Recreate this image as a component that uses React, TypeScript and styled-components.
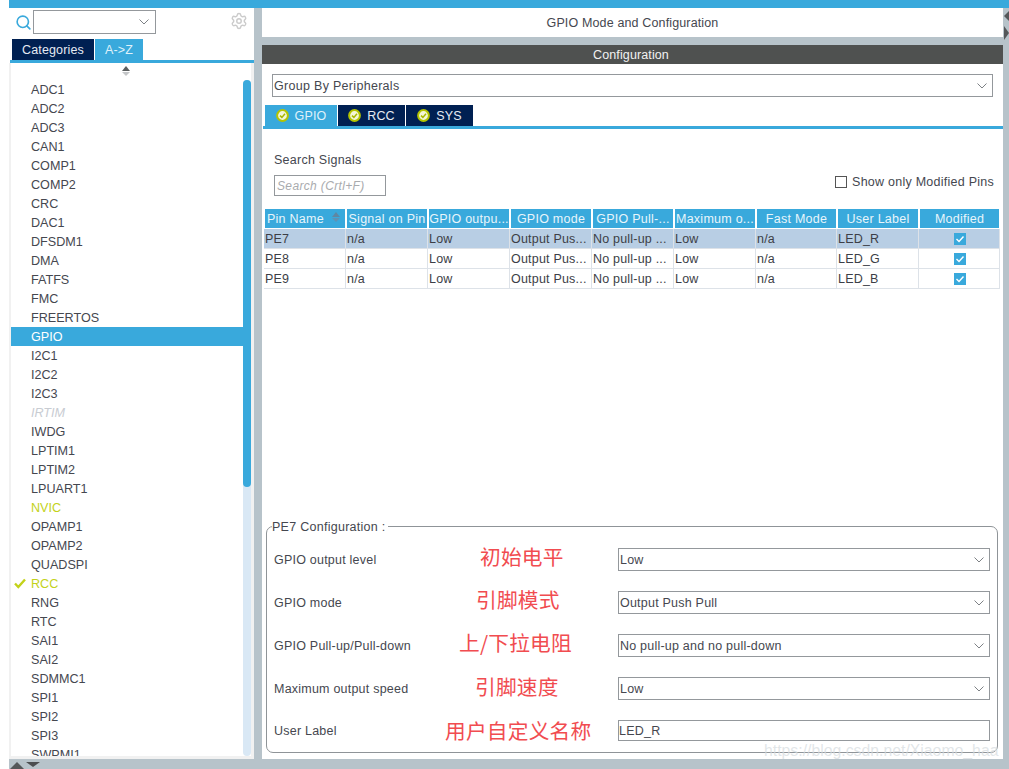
import React from "react";
import styled, { createGlobalStyle } from "styled-components";
import { Search, Settings } from "lucide-react";

const BLUE = "#39a9dc";
const NAVY = "#002052";
const GREY = "#b7c3ca";
const INK = "#45474f";
const LINE = "#94989c";
const LIME = "#c3d21a";
const FONT = `"Liberation Sans", Arial, sans-serif`;

const Global = createGlobalStyle`
  html, body { margin: 0; padding: 0; background: #fff; }
  * { box-sizing: border-box; }
  body { font-family: ${FONT}; color: ${INK}; overflow: hidden; }
`;

const Page = styled.div`
  width: 1009px;
  height: 769px;
  padding-left: 9px;
  display: flex;
  flex-direction: column;
  background: #fff;
  overflow: hidden;
  position: relative;
`;
const TopBar = styled.div`
  height: 8px;
  flex: none;
  background: ${BLUE};
`;
const Body = styled.div`
  flex: none;
  height: 751px;
  display: flex;
  background: ${GREY};
`;
const Footer = styled.div`
  flex: 1;
  background: ${GREY};
  display: flex;
  align-items: flex-end;
  gap: 2px;
  padding-left: 1px;
`;
const FooterDown = styled.span`
  align-self: flex-start;
  margin-top: 3px;
`;
const Sidebar = styled.aside`
  width: 245px;
  flex: none;
  background: #fff;
  display: flex;
  flex-direction: column;
`;
const SearchRow = styled.div`
  height: 31px;
  flex: none;
  display: flex;
  align-items: flex-start;
  padding: 2px 6px 0 6px;
  svg { flex: none; }
`;
const SearchIcon = styled.span`
  width: 18px;
  height: 24px;
  display: flex;
  align-items: center;
  color: ${BLUE};
`;
const Combo = styled.div`
  width: 123px;
  height: 24px;
  border: 1px solid ${LINE};
  display: flex;
  align-items: center;
  justify-content: flex-end;
  padding-right: 6px;
`;
const GearIcon = styled.span`
  margin-left: auto;
  margin-top: 2px;
  color: #cbcbcb;
  height: 18px;
`;
const TabRow = styled.div<{ $pad: number }>`
  height: 21px;
  flex: none;
  display: flex;
  gap: 1px;
  padding-left: ${(p) => p.$pad}px;
`;
const Tab = styled.div<{ $active?: boolean; $w: number }>`
  width: ${(p) => p.$w}px;
  height: 21px;
  background: ${(p) => (p.$active ? BLUE : NAVY)};
  color: ${(p) => (p.$active ? "#dff1fa" : "#e6ebf2")};
  font-size: 12.5px;
  letter-spacing: 0.15px;
  display: flex;
  align-items: center;
  justify-content: center;
  gap: 6px;
`;
const SideRule = styled.div`
  height: 3px;
  flex: none;
  margin-left: 1px;
  background: ${BLUE};
`;
const ListFrame = styled.div`
  flex: 1;
  min-height: 0;
  display: flex;
  flex-direction: column;
  background: #f1f1f1;
  padding: 0 3px 3px 2px;
`;
const ScrollCap = styled.div`
  height: 17px;
  flex: none;
  background: #fff;
  display: flex;
  flex-direction: column;
  align-items: center;
  padding-top: 3px;
  gap: 1px;
  padding-right: 10px;
`;
const TriUp = styled.i<{ $c: string; $w: number; $h: number }>`
  display: block;
  width: 0;
  height: 0;
  border-left: ${(p) => p.$w / 2}px solid transparent;
  border-right: ${(p) => p.$w / 2}px solid transparent;
  border-bottom: ${(p) => p.$h}px solid ${(p) => p.$c};
`;
const TriDown = styled.i<{ $c: string; $w: number; $h: number }>`
  display: block;
  width: 0;
  height: 0;
  border-left: ${(p) => p.$w / 2}px solid transparent;
  border-right: ${(p) => p.$w / 2}px solid transparent;
  border-top: ${(p) => p.$h}px solid ${(p) => p.$c};
`;
const ListArea = styled.div`
  flex: 1;
  min-height: 0;
  display: flex;
  background: #fff;
`;
const List = styled.div`
  flex: 1;
  overflow: hidden;
`;
const Item = styled.div<{ $selected?: boolean; $tone?: "ok" | "off" }>`
  height: 19px;
  line-height: 21px;
  padding-left: 20px;
  font-size: 12.6px;
  position: relative;
  white-space: nowrap;
  overflow: hidden;
  background: ${(p) => (p.$selected ? BLUE : "transparent")};
  color: ${(p) => (p.$selected ? "#fff" : p.$tone === "ok" ? LIME : p.$tone === "off" ? "#c8ccd2" : INK)};
  font-style: ${(p) => (p.$tone === "off" ? "italic" : "normal")};
`;
const ItemCheck = styled.svg`
  position: absolute;
  left: 3px;
  top: 4px;
`;
const Track = styled.div`
  width: 8px;
  flex: none;
  background: #d9e8f5;
  border-radius: 4px;
`;
const Thumb = styled.div`
  height: 407px;
  background: ${BLUE};
  border-radius: 4px;
`;
const Main = styled.main`
  width: 741px;
  flex: none;
  margin-left: 8px;
  display: flex;
  flex-direction: column;
`;
const TitleBar = styled.div`
  height: 29px;
  flex: none;
  background: #fff;
  display: flex;
  align-items: center;
  justify-content: center;
  font-size: 12.5px;
  letter-spacing: 0.14px;
  margin-bottom: 8px;
`;
const ConfigHead = styled.div`
  height: 19px;
  flex: none;
  background: #4f5150;
  color: #f2f2f2;
  font-size: 12.5px;
  letter-spacing: 0.12px;
  display: flex;
  align-items: center;
  justify-content: center;
  padding-right: 3px;
`;
const Panel = styled.div`
  flex: 1;
  min-height: 0;
  background: #fff;
  display: flex;
  flex-direction: column;
`;
const GroupSelect = styled.div`
  height: 23px;
  flex: none;
  margin: 10px 10px 8px 10px;
  border: 1px solid ${LINE};
  display: flex;
  align-items: center;
  justify-content: space-between;
  padding: 0 5px 0 1px;
  font-size: 12.5px;
  letter-spacing: 0.3px;
`;
const TabIcon = styled.svg`
  flex: none;
`;
const FilterRow = styled.div`
  flex: none;
  display: flex;
  justify-content: space-between;
  align-items: flex-end;
  padding: 23px 9px 0 12px;
  font-size: 12.5px;
  letter-spacing: 0.25px;
`;
const FilterLeft = styled.div`
  display: flex;
  flex-direction: column;
  gap: 7px;
`;
const FilterLabel = styled.div`
  line-height: 16px;
`;
const SearchBox = styled.div`
  width: 112px;
  height: 21px;
  border: 1px solid ${LINE};
  padding-left: 2px;
  line-height: 21px;
  font-style: italic;
  font-size: 12px;
  letter-spacing: 0.35px;
  color: #a9abae;
  white-space: nowrap;
  overflow: hidden;
`;
const ModifiedToggle = styled.label`
  display: flex;
  align-items: center;
  gap: 5px;
  height: 21px;
  margin-bottom: 4px;
  padding-left: 1px;
`;
const EmptyBox = styled.span`
  width: 12px;
  height: 12px;
  border: 1px solid #555;
  background: #fff;
`;
const Table = styled.div`
  flex: none;
  margin: 13px 3px 0 2px;
  width: 736px;
`;
const TRow = styled.div`
  display: grid;
  grid-template-columns: repeat(6, 82px) 81px 82px 81px;
  height: 20px;
`;
const HeadCell = styled.div<{ $left?: boolean }>`
  height: 19px;
  margin: 0 1px 1px;
  background: ${BLUE};
  color: #e8f5fb;
  font-size: 12.5px;
  letter-spacing: 0.25px;
  line-height: 21px;
  white-space: nowrap;
  overflow: hidden;
  text-align: ${(p) => (p.$left ? "left" : "center")};
  padding-left: ${(p) => (p.$left ? "2px" : "0")};
  position: relative;
`;
const SortMark = styled.span`
  position: absolute;
  right: 5px;
  top: 3px;
  display: flex;
  flex-direction: column;
  gap: 1px;
`;
const Cell = styled.div<{ $selected?: boolean; $center?: boolean }>`
  height: 20px;
  background: ${(p) => (p.$selected ? "#b8cee4" : "#fff")};
  border-right: 1px solid #dde2e8;
  border-bottom: 1px solid #dde2e8;
  padding-left: 1px;
  font-size: 12.5px;
  letter-spacing: 0.2px;
  line-height: 21px;
  color: #3c3e46;
  white-space: nowrap;
  overflow: hidden;
  display: ${(p) => (p.$center ? "flex" : "block")};
  align-items: center;
  justify-content: center;
`;
const TickBox = styled.svg`
  display: block;
`;
const Spacer = styled.div`
  flex: 1;
`;
const Group = styled.fieldset`
  flex: none;
  height: 235px;
  margin: 0 5px 6px 4px;
  padding: 3px 0 0 7px;
  border: 1px solid #8f9498;
  border-radius: 7px;
  min-width: 0;
`;
const GroupLegend = styled.legend`
  margin-left: -2px;
  padding: 2px 2px 0 0;
  font-size: 12.5px;
  letter-spacing: 0.27px;
  line-height: 15px;
`;
const FormRow = styled.div`
  height: 43px;
  display: flex;
  align-items: center;
  font-size: 12.5px;
  letter-spacing: 0.22px;
  &:last-child { height: 41px; }
`;
const FormLabel = styled.div`
  width: 150px;
  flex: none;
  white-space: nowrap;
`;
const NoteSlot = styled.div`
  width: 194px;
  flex: none;
  position: relative;
  height: 100%;
`;
const Note = styled.span<{ $left: number; $up: number }>`
  position: absolute;
  left: ${(p) => p.$left}px;
  top: ${(p) => 10 - p.$up}px;
  font-family: "Noto Sans CJK SC", sans-serif;
  font-weight: 400;
  font-size: 20.7px;
  line-height: 24px;
  color: #f14c50;
  white-space: nowrap;
`;
const FieldSelect = styled.div`
  width: 372px;
  height: 23px;
  flex: none;
  border: 1px solid ${LINE};
  display: flex;
  align-items: center;
  justify-content: space-between;
  padding: 0 5px 0 1px;
`;
const FieldInput = styled.div`
  width: 372px;
  height: 21px;
  flex: none;
  border: 1px solid ${LINE};
  padding-left: 0;
  line-height: 20px;
`;
const EdgeArrows = styled.div`
  flex: 1;
  display: flex;
  flex-direction: column;
  align-items: flex-start;
  gap: 5px;
  padding: 3px 0 0 1px;
`;
const TriLeft = styled.i`
  display: block;
  width: 0;
  height: 0;
  border-top: 5px solid transparent;
  border-bottom: 5px solid transparent;
  border-right: 5px solid #55585a;
`;
const TriRight = styled.i`
  display: block;
  width: 0;
  height: 0;
  border-top: 7px solid transparent;
  border-bottom: 7px solid transparent;
  border-left: 5px solid #55585a;
`;
const Watermark = styled.div`
  position: absolute;
  left: 764px;
  top: 742px;
  font-size: 15.8px;
  line-height: 18px;
  color: rgba(214, 220, 224, 0.72);
  white-space: nowrap;
`;

const Chevron = () => (
  <svg width="10" height="6" viewBox="0 0 10 6" fill="none" stroke="#7d8185" strokeWidth="1">
    <polyline points="0.5,0.5 5,5 9.5,0.5" />
  </svg>
);

const GoodIcon = () => (
  <TabIcon width="13" height="13" viewBox="0 0 13 13">
    <circle cx="6.5" cy="6.5" r="5.4" fill="#f4f6d8" stroke="#b4c400" strokeWidth="2" />
    <polyline points="4,6.6 5.9,8.4 9,4.8" fill="none" stroke="#aab800" strokeWidth="1.5" />
  </TabIcon>
);

const items: { n: string; tone?: "ok" | "off"; check?: boolean; sel?: boolean }[] = [
  { n: "ADC1" }, { n: "ADC2" }, { n: "ADC3" }, { n: "CAN1" }, { n: "COMP1" }, { n: "COMP2" },
  { n: "CRC" }, { n: "DAC1" }, { n: "DFSDM1" }, { n: "DMA" }, { n: "FATFS" }, { n: "FMC" },
  { n: "FREERTOS" }, { n: "GPIO", sel: true }, { n: "I2C1" }, { n: "I2C2" }, { n: "I2C3" },
  { n: "IRTIM", tone: "off" }, { n: "IWDG" }, { n: "LPTIM1" }, { n: "LPTIM2" }, { n: "LPUART1" },
  { n: "NVIC", tone: "ok" }, { n: "OPAMP1" }, { n: "OPAMP2" }, { n: "QUADSPI" },
  { n: "RCC", tone: "ok", check: true }, { n: "RNG" }, { n: "RTC" }, { n: "SAI1" }, { n: "SAI2" },
  { n: "SDMMC1" }, { n: "SPI1" }, { n: "SPI2" }, { n: "SPI3" }, { n: "SWPMI1" },
];

const heads = ["Pin Name", "Signal on Pin", "GPIO outpu...", "GPIO mode", "GPIO Pull-...", "Maximum o...", "Fast Mode", "User Label", "Modified"];
const rows = [
  ["PE7", "n/a", "Low", "Output Pus...", "No pull-up ...", "Low", "n/a", "LED_R"],
  ["PE8", "n/a", "Low", "Output Pus...", "No pull-up ...", "Low", "n/a", "LED_G"],
  ["PE9", "n/a", "Low", "Output Pus...", "No pull-up ...", "Low", "n/a", "LED_B"],
];

const form = [
  { label: "GPIO output level", note: "初始电平", left: 56, up: 4, value: "Low" },
  { label: "GPIO mode", note: "引脚模式", left: 52, up: 4, value: "Output Push Pull" },
  { label: "GPIO Pull-up/Pull-down", note: "上/下拉电阻", left: 35, up: 4, value: "No pull-up and no pull-down" },
  { label: "Maximum output speed", note: "引脚速度", left: 51, up: 3, value: "Low" },
  { label: "User Label", note: "用户自定义名称", left: 21, up: 2, value: "LED_R", input: true },
];

export default function App() {
  return (
    <Page>
      <Global />
      <TopBar />
      <Body>
        <Sidebar>
          <SearchRow>
            <SearchIcon><Search size={17} strokeWidth={2.3} /></SearchIcon>
            <Combo><Chevron /></Combo>
            <GearIcon><Settings size={18} strokeWidth={1.9} /></GearIcon>
          </SearchRow>
          <TabRow $pad={3}>
            <Tab $w={82}>Categories</Tab>
            <Tab $active $w={48}>A-&gt;Z</Tab>
          </TabRow>
          <SideRule />
          <ListFrame>
            <ScrollCap>
              <TriUp $c="#5c5f60" $w={9} $h={5} />
              <TriDown $c="#c4c6c8" $w={9} $h={4} />
            </ScrollCap>
            <ListArea>
              <List>
                {items.map((it) => (
                  <Item key={it.n} $selected={it.sel} $tone={it.tone}>
                    {it.check && (
                      <ItemCheck width="12" height="11" viewBox="0 0 12 11" fill="none" stroke={LIME} strokeWidth="2.4">
                        <polyline points="1,5.5 4.3,9 11,1.5" />
                      </ItemCheck>
                    )}
                    {it.n}
                  </Item>
                ))}
              </List>
              <Track><Thumb /></Track>
            </ListArea>
          </ListFrame>
        </Sidebar>
        <Main>
          <TitleBar>GPIO Mode and Configuration</TitleBar>
          <ConfigHead>Configuration</ConfigHead>
          <Panel>
            <GroupSelect>Group By Peripherals<Chevron /></GroupSelect>
            <TabRow $pad={3}>
              <Tab $active $w={72}><GoodIcon />GPIO</Tab>
              <Tab $w={67}><GoodIcon />RCC</Tab>
              <Tab $w={67}><GoodIcon />SYS</Tab>
            </TabRow>
            <SideRule />
            <FilterRow>
              <FilterLeft>
                <FilterLabel>Search Signals</FilterLabel>
                <SearchBox>Search (Crtl+F)</SearchBox>
              </FilterLeft>
              <ModifiedToggle><EmptyBox />Show only Modified Pins</ModifiedToggle>
            </FilterRow>
            <Table>
              <TRow>
                {heads.map((h, i) => (
                  <HeadCell key={h} $left={i === 0}>
                    {h}
                    {i === 0 && (
                      <SortMark>
                        <TriUp $c="#5f87a3" $w={8} $h={5} />
                        <TriDown $c="#5f92b4" $w={8} $h={4} />
                      </SortMark>
                    )}
                  </HeadCell>
                ))}
              </TRow>
              {rows.map((r, ri) => (
                <TRow key={r[0]}>
                  {r.map((c, ci) => (
                    <Cell key={ci} $selected={ri === 0}>{c}</Cell>
                  ))}
                  <Cell $selected={ri === 0} $center>
                    <TickBox width="12" height="12" viewBox="0 0 12 12">
                      <rect width="12" height="12" fill={BLUE} />
                      <polyline points="2.5,6 5,8.5 9.5,3.5" fill="none" stroke="#fff" strokeWidth="1.4" />
                    </TickBox>
                  </Cell>
                </TRow>
              ))}
            </Table>
            <Spacer />
            <Group>
              <GroupLegend>PE7 Configuration :</GroupLegend>
              {form.map((f) => (
                <FormRow key={f.label}>
                  <FormLabel>{f.label}</FormLabel>
                  <NoteSlot><Note $left={f.left} $up={f.up}>{f.note}</Note></NoteSlot>
                  {f.input ? (
                    <FieldInput>{f.value}</FieldInput>
                  ) : (
                    <FieldSelect>{f.value}<Chevron /></FieldSelect>
                  )}
                </FormRow>
              ))}
            </Group>
          </Panel>
        </Main>
        <EdgeArrows>
          <TriLeft />
          <TriRight />
        </EdgeArrows>
      </Body>
      <Footer>
        <TriUp $c="#55585a" $w={14} $h={7} />
        <FooterDown><TriDown $c="#4b4e50" $w={14} $h={5} /></FooterDown>
      </Footer>
      <Watermark>https://blog.csdn.net/Xiaomo_haa</Watermark>
    </Page>
  );
}
